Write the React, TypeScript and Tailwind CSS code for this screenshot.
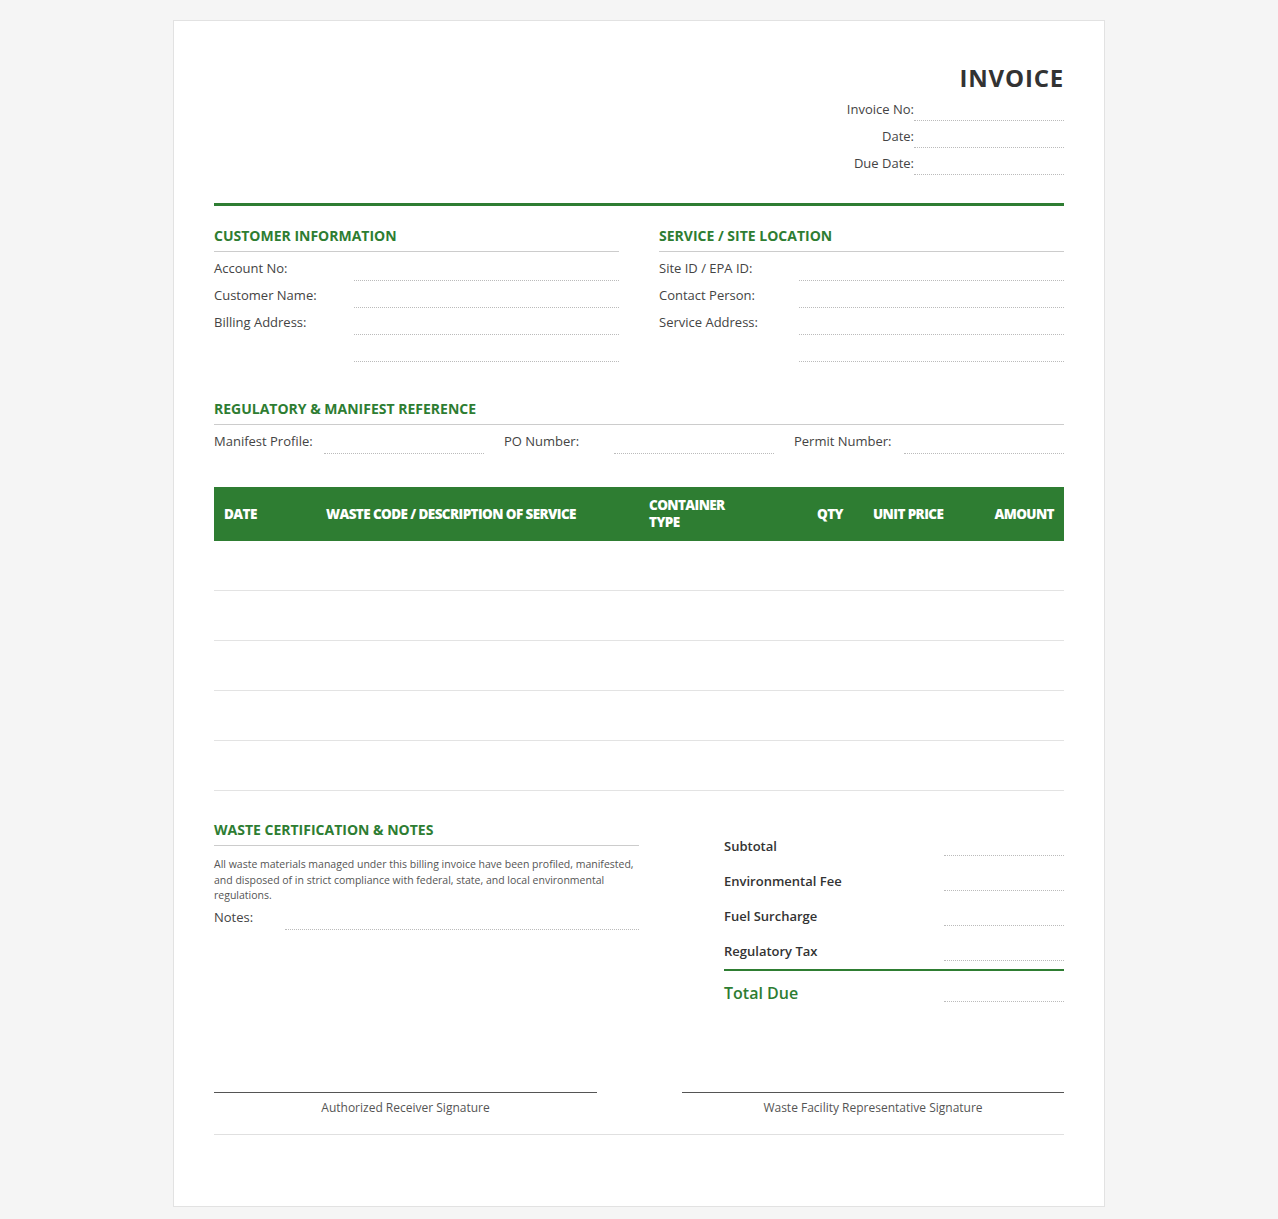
import React from "react";

const G = "text-[#2e7d32]";

function Field({ label, lw = "w-[140px]" }: { label: string; lw?: string }) {
  return (
    <div className="flex items-end h-[27px]">
      <div className={`${lw} shrink-0 text-[13px] text-[#444] pb-[6px] leading-none`}>{label}</div>
      <div className="flex-1 border-b border-dotted border-[#bbb] h-[14px]" />
    </div>
  );
}

function SectionHead({ children }: { children: React.ReactNode }) {
  return (
    <div className={`text-[14px] font-bold ${G} border-b border-[#ccc] pb-[6px] leading-[18px]`}>{children}</div>
  );
}

export default function App() {
  return (
    <div className="min-h-screen bg-[#f5f5f5] py-[20px]" style={{ fontFamily: '"Open Sans", "Noto Sans", sans-serif' }}>
      <div className="w-[932px] mx-auto bg-white border border-[#e2e2e2] px-[40px] pt-[40px] pb-[71px] text-[#333]">
        <div className="flex justify-end">
          <div className="flex flex-col items-end">
            <div className="text-[24px] font-bold tracking-[0.8px] leading-[34px] text-[#333]">INVOICE</div>
            <div className="grid grid-cols-[auto_150px]">
              {["Invoice No:", "Date:", "Due Date:"].map((l) => (
                <React.Fragment key={l}>
                  <div className="h-[27px] flex items-end justify-end text-[13px] text-[#444] leading-none pb-[6px]">{l}</div>
                  <div className="h-[27px] flex items-end"><div className="w-full border-b border-dotted border-[#bbb] mb-[1px]" /></div>
                </React.Fragment>
              ))}
            </div>
          </div>
        </div>
        <div className="h-[3px] bg-[#2e7d32] mt-[27px]" />
        <div className="grid grid-cols-2 gap-[40px] mt-[21px]">
          <div>
            <SectionHead>CUSTOMER INFORMATION</SectionHead>
            <div className="mt-[2px]">
              <Field label="Account No:" />
              <Field label="Customer Name:" />
              <Field label="Billing Address:" />
              <Field label="" />
            </div>
          </div>
          <div>
            <SectionHead>SERVICE / SITE LOCATION</SectionHead>
            <div className="mt-[2px]">
              <Field label="Site ID / EPA ID:" />
              <Field label="Contact Person:" />
              <Field label="Service Address:" />
              <Field label="" />
            </div>
          </div>
        </div>
        <div className="mt-[38px]">
          <SectionHead>REGULATORY &amp; MANIFEST REFERENCE</SectionHead>
          <div className="grid grid-cols-3 gap-[20px] mt-[2px]">
            <Field label="Manifest Profile:" lw="w-[110px]" />
            <Field label="PO Number:" lw="w-[110px]" />
            <Field label="Permit Number:" lw="w-[110px]" />
          </div>
        </div>
        <div className="mt-[33px]">
          <div className="h-[54px] bg-[#2e7d32] text-white font-extrabold text-[13.5px] tracking-[-0.6px] flex items-center px-[10px] leading-[17px]">
            <div className="w-[102px]">DATE</div>
            <div className="w-[323px]">WASTE CODE / DESCRIPTION OF SERVICE</div>
            <div className="w-[168px]">CONTAINER<br />TYPE</div>
            <div className="w-[56px]">QTY</div>
            <div className="w-[100px]">UNIT PRICE</div>
            <div className="flex-1 text-right">AMOUNT</div>
          </div>
          {[0, 1, 2, 3, 4].map((i) => (
            <div key={i} className="h-[50px] border-b border-[#e3e3e3]" />
          ))}
        </div>
        <div className="flex justify-between mt-[30px]">
          <div className="w-[425px]">
            <SectionHead>WASTE CERTIFICATION &amp; NOTES</SectionHead>
            <p className="text-[10.5px] leading-[15.5px] text-[#555] mt-[11px]">
              All waste materials managed under this billing invoice have been profiled, manifested, and disposed of in strict compliance with federal, state, and local environmental regulations.
            </p>
            <div className="-mt-[1px]">
              <Field label="Notes:" lw="w-[71px]" />
            </div>
          </div>
          <div className="w-[340px]">
            {["Subtotal", "Environmental Fee", "Fuel Surcharge", "Regulatory Tax"].map((l) => (
              <div key={l} className="flex items-end h-[35px]">
                <div className="flex-1 text-[13px] text-[#333] font-semibold leading-none pb-[3px]">{l}</div>
                <div className="w-[120px] border-b border-dotted border-[#bbb] h-[14px]" />
              </div>
            ))}
            <div className="h-[2px] bg-[#2e7d32] mt-[8px]" />
            <div className="flex items-end h-[31px]">
              <div className={`flex-1 text-[16px] font-semibold ${G} leading-none pb-[1px]`}>Total Due</div>
              <div className="w-[120px] border-b border-dotted border-[#bbb] h-[14px]" />
            </div>
          </div>
        </div>
        <div className="flex justify-between mt-[90px] border-b border-[#e0e0e0] pb-[17px]">
          <div className="w-[383px] border-t border-[#555] pt-[6px] text-center text-[12px] text-[#555]">Authorized Receiver Signature</div>
          <div className="w-[382px] border-t border-[#555] pt-[6px] text-center text-[12px] text-[#555]">Waste Facility Representative Signature</div>
        </div>
      </div>
    </div>
  );
}
